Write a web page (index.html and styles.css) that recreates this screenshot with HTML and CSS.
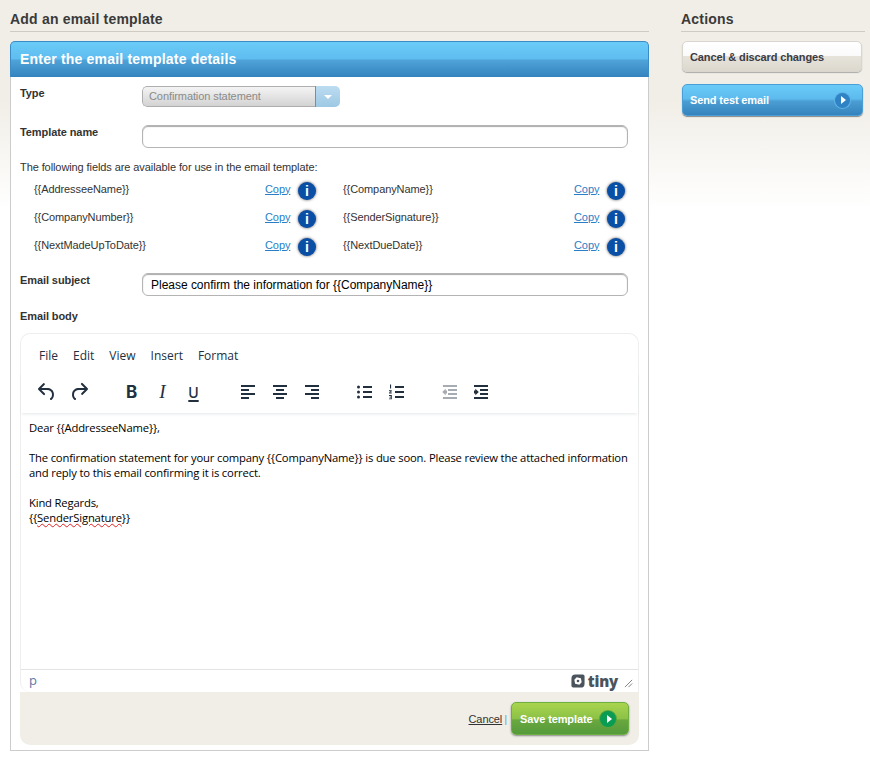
FILE: index.html
```html
<!DOCTYPE html>
<html lang="en">
<head>
<meta charset="utf-8">
<title>Add an email template</title>
<link rel="stylesheet" href="styles.css">
</head>
<body>
<div class="page">
  <main class="main">
    <h2 class="section-title">Add an email template</h2>
    <section class="panel">
      <h3 class="panel-head">Enter the email template details</h3>
      <div class="panel-body">
        <div class="form-row type-row">
          <label class="form-label">Type</label>
          <div class="select">
            <span class="select-value">Confirmation statement</span>
            <span class="select-arrow"><i class="caret"></i></span>
          </div>
        </div>
        <div class="form-row name-row">
          <label class="form-label">Template name</label>
          <div class="text-input"></div>
        </div>
        <p class="fields-intro">The following fields are available for use in the email template:</p>
        <div class="fields">
          <div class="field"><span class="field-name">{{AddresseeName}}</span><a class="copy">Copy</a><span class="info">i</span></div>
          <div class="field"><span class="field-name">{{CompanyName}}</span><a class="copy">Copy</a><span class="info">i</span></div>
          <div class="field"><span class="field-name">{{CompanyNumber}}</span><a class="copy">Copy</a><span class="info">i</span></div>
          <div class="field"><span class="field-name">{{SenderSignature}}</span><a class="copy">Copy</a><span class="info">i</span></div>
          <div class="field"><span class="field-name">{{NextMadeUpToDate}}</span><a class="copy">Copy</a><span class="info">i</span></div>
          <div class="field"><span class="field-name">{{NextDueDate}}</span><a class="copy">Copy</a><span class="info">i</span></div>
        </div>
        <div class="form-row subject-row">
          <label class="form-label">Email subject</label>
          <div class="text-input">Please confirm the information for {{CompanyName}}</div>
        </div>
        <div class="body-label">Email body</div>
        <div class="editor">
          <div class="menubar">
            <span>File</span><span>Edit</span><span>View</span><span>Insert</span><span>Format</span>
          </div>
          <div class="toolbar">
            <div class="tool-group">
              <span class="tool"><svg viewBox="0 0 24 24"><path d="M6.4 8H12c3.7 0 6.2 2 6.8 5.1.6 2.7-.4 5.6-2.3 6.8a1 1 0 0 1-1-1.8c1.1-.6 1.8-2.7 1.4-4.6-.5-2.1-2.1-3.5-4.9-3.5H6.4l3.3 3.3a1 1 0 1 1-1.4 1.4l-5-5a1 1 0 0 1 0-1.4l5-5a1 1 0 0 1 1.4 1.4L6.4 8Z"/></svg></span>
              <span class="tool"><svg viewBox="0 0 24 24"><path d="M17.6 10H12c-2.8 0-4.4 1.4-4.9 3.5-.4 2 .3 4 1.4 4.6a1 1 0 1 1-1 1.8c-2-1.2-2.9-4.1-2.3-6.8.6-3 3-5.1 6.8-5.1h5.6l-3.3-3.3a1 1 0 1 1 1.4-1.4l5 5a1 1 0 0 1 0 1.4l-5 5a1 1 0 0 1-1.4-1.4l3.3-3.3Z"/></svg></span>
            </div>
            <div class="tool-group group-text">
              <span class="tool glyph glyph-b">B</span>
              <span class="tool glyph glyph-i">I</span>
              <span class="tool glyph glyph-u">U</span>
            </div>
            <div class="tool-group group-align">
              <span class="tool"><svg viewBox="0 0 24 24"><path d="M5 5h14v2H5zM5 9h8v2H5zM5 13h14v2H5zM5 17h8v2H5z"/></svg></span>
              <span class="tool"><svg viewBox="0 0 24 24"><path d="M5 5h14v2H5zM8 9h8v2H8zM5 13h14v2H5zM8 17h8v2H8z"/></svg></span>
              <span class="tool"><svg viewBox="0 0 24 24"><path d="M5 5h14v2H5zM11 9h8v2h-8zM5 13h14v2H5zM11 17h8v2h-8z"/></svg></span>
            </div>
            <div class="tool-group">
              <span class="tool"><svg viewBox="0 0 24 24"><path d="M11 6h9v2h-9zM11 11h9v2h-9zM11 16h9v2h-9z"/><circle cx="6.500" cy="7" r="1.500"/><circle cx="6.500" cy="12" r="1.500"/><circle cx="6.500" cy="17" r="1.500"/></svg></span>
              <span class="tool"><svg viewBox="0 0 24 24"><path d="M11 6h9v2h-9zM11 11h9v2h-9zM11 16h9v2h-9zM6 4.500h1.100v4H6zM5 10.300h2.800v.9l-1.700 1.400h1.700v1H5v-.9l1.700-1.400H5zM5 15h2.800v4.300H5v-.9h1.800v-.8H5.500v-.8h1.300v-.8H5z"/></svg></span>
            </div>
            <div class="tool-group group-indent">
              <span class="tool tool-off"><svg viewBox="0 0 24 24"><path d="M6 5h14v2H6zM11 9h9v2h-9zM11 13h9v2h-9zM6 17h14v2H6zM8.700 8.700 5.200 12l3.500 3.300V13.500h1.300v-3H8.700z"/></svg></span>
              <span class="tool"><svg viewBox="0 0 24 24"><path d="M5 5h14v2H5zM11 9h8v2h-8zM11 13h8v2h-8zM5 17h14v2H5zM6.300 8.700 9.800 12l-3.500 3.300v-1.800H5v-3h1.300z"/></svg></span>
            </div>
          </div>
          <div class="content">
            <p>Dear {{AddresseeName}},</p>
            <p class="blank"></p>
            <p>The confirmation statement for your company {{CompanyName}} is due soon. Please review the attached information and reply to this email confirming it is correct.</p>
            <p class="blank"></p>
            <p>Kind Regards,</p>
            <p>{{<span class="spell">SenderSignature</span>}}</p>
          </div>
          <div class="statusbar">
            <span class="path">p</span>
            <span class="brand">
              <svg class="brand-mark" viewBox="0 0 16 16"><path fill-rule="evenodd" d="M5 .5h8.500A2 2 0 0 1 15.500 2.500V11a4.500 4.500 0 0 1-4.500 4.500H2.500A2 2 0 0 1 .5 13.500V5A4.500 4.500 0 0 1 5 .5ZM6.500 3.800 11.300 4.800 12.200 9.500 9.500 12.200 4.700 11.200 3.800 6.500Zm1.500 2.700a1.500 1.500 0 1 0 0 3 1.500 1.500 0 0 0 0-3Z"/></svg>
              <span class="brand-word">tiny</span>
            </span>
            <svg class="resize" viewBox="0 0 10 10"><path d="M9 1 1 9M9 5 5 9" /></svg>
          </div>
        </div>
        <div class="form-actions">
          <a class="cancel-link">Cancel</a>
          <span class="sep">|</span>
          <a class="btn-save">Save template<span class="go go-green"><i></i></span></a>
        </div>
      </div>
    </section>
  </main>
  <aside class="side">
    <h2 class="section-title">Actions</h2>
    <a class="btn-cancel">Cancel &amp; discard changes</a>
    <a class="btn-send">Send test email<span class="go go-blue"><i></i></span></a>
  </aside>
</div>
</body>
</html>
```
FILE: styles.css
```css
* { box-sizing: border-box; }
html, body { margin: 0; padding: 0; }
body {
  min-height: 757px;
  font-family: "Liberation Sans", Arial, sans-serif;
  font-size: 11px;
  letter-spacing: -.09px;
  color: #333;
  background: linear-gradient(#f1eee7 0, #f1eee7 100px, #fff 210px) no-repeat;
}
.page { display: flex; gap: 32px; padding: 0 5px 0 10px; }
.main { width: 639px; flex: none; }
.side { width: 184px; flex: none; }
.section-title {
  margin: 0;
  height: 32px;
  padding-top: 11px;
  font-size: 14px;
  line-height: 16px;
  font-weight: bold;
  letter-spacing: .2px;
  color: #3a3a3a;
  border-bottom: 1px solid #cfcbc3;
}
.panel {
  margin-top: 9px;
  height: 710px;
  background: #fff;
  border: 1px solid #ccc;
  border-top: 0;
  border-radius: 6px 6px 0 0;
}
.panel-head {
  margin: 0 -1px;
  height: 36px;
  padding-left: 9px;
  font-size: 14px;
  line-height: 35px;
  font-weight: bold;
  letter-spacing: .2px;
  color: #fff;
  background: linear-gradient(#6acbf8 0, #5fbdef 48%, #4fa3d8 52%, #3483be 100%);
  border: 1px solid #3a8cc6;
  border-bottom: 0;
  border-radius: 5px 5px 0 0;
}
.panel-body { padding: 0 9px; }
.form-row { display: flex; }
.form-label {
  width: 122px;
  flex: none;
  font-size: 11px;
  font-weight: bold;
  line-height: 13px;
  color: #333;
}
.type-row { padding-top: 9px; }
.type-row .form-label { padding-top: 1px; }
.select {
  display: flex;
  width: 198px;
  height: 21px;
  border-radius: 5px;
  overflow: hidden;
}
.select-value {
  flex: 1;
  padding-left: 6px;
  line-height: 19px;
  font-size: 11px;
  color: #8a8a8a;
  background: linear-gradient(#f4f4f4, #d3d3d3);
  border: 1px solid #aeaeae;
  border-right: 0;
  border-radius: 5px 0 0 5px;
}
.select-arrow {
  width: 25px;
  display: flex;
  align-items: center;
  justify-content: center;
  background: linear-gradient(#bcdcf0, #9dc8e4);
  border-left: 1px solid #8a8a8a;
}
.caret {
  width: 0;
  height: 0;
  border: 4px solid transparent;
  border-top: 4px solid #fff;
  border-bottom: 0;
}
.name-row { padding-top: 18px; }
.name-row .form-label { padding-top: 1px; }
.text-input {
  width: 486px;
  height: 23px;
  padding-left: 8px;
  font-size: 12px;
  letter-spacing: -.02px;
  line-height: 22px;
  color: #000;
  background: #fff;
  border: 1px solid #b4b4b4;
  border-radius: 6px;
  box-shadow: inset 0 1px 1px #aaa;
}
.fields-intro {
  margin: 13px 0 0;
  font-size: 11px;
  line-height: 13px;
  color: #333;
}
.fields {
  display: grid;
  grid-template-columns: 309px 290px;
  grid-auto-rows: 28px;
  margin-top: 2px;
  padding-left: 14px;
}
.field { display: flex; align-items: center; padding-top: 1px; }
.field-name { width: 231px; flex: none; font-size: 11px; color: #333; margin-top: -4px; }
.copy { width: 33px; flex: none; font-size: 11px; color: #2a7ec6; text-decoration: underline; margin-top: -4px; }
.info {
  width: 18px;
  height: 18px;
  flex: none;
  border-radius: 50%;
  background: #0a4fa6;
  box-shadow: 0 0 3px #555;
  color: #fff;
  font-size: 14px;
  font-weight: bold;
  line-height: 18px;
  text-align: center;
}
.subject-row { padding-top: 13px; }
.subject-row .form-label { padding-top: 1px; }
.body-label {
  margin-top: 14px;
  font-size: 11px;
  font-weight: bold;
  line-height: 13px;
}
.editor {
  margin-top: 10px;
  height: 359px;
  display: flex;
  flex-direction: column;
  border: 1px solid #eee;
  border-bottom: 0;
  border-radius: 10px 10px 0 10px;
  font-family: "Open Sans", sans-serif;
  letter-spacing: 0;
  color: #222f3e;
}
.menubar {
  display: flex;
  gap: 15px;
  height: 38px;
  padding: 13px 0 0 18px;
  font-size: 12px;
  line-height: 17px;
}
.toolbar {
  display: flex;
  gap: 20px;
  height: 41px;
  padding: 6px 0 0 10px;
  box-shadow: 0 2px 3px -1px rgba(34, 47, 62, .12);
  position: relative;
}
.tool-group { display: flex; }
.group-text { margin-left: 1px; }
.group-align { margin-left: 3px; }
.group-indent { margin-left: 1px; }
.tool {
  width: 32px;
  height: 28px;
  display: flex;
  align-items: center;
  justify-content: center;
}
.tool svg { width: 24px; height: 24px; fill: #222f3e; }
.tool-off svg { fill: #a7acb2; }
.glyph { width: 31px; color: #222f3e; line-height: 1; }
.glyph-b { font: bold 17px Inter, sans-serif; }
.glyph-i { font: italic 19px "Liberation Serif", serif; }
.glyph-u { font: 500 14px Inter, sans-serif; text-decoration: underline 2px; text-underline-offset: 2px; }
.content {
  flex: 1;
  padding: 7px 8px 0;
  font-size: 11.25px;
  letter-spacing: -.17px;
  line-height: 15px;
  color: #000;
}
.content p { margin: 0; }
.content .blank { height: 15px; }
.spell { text-decoration: underline wavy #e02020 1px; text-underline-offset: 1px; }
.statusbar {
  height: 23px;
  flex: none;
  display: flex;
  align-items: center;
  padding: 0 5px 0 8px;
  border-top: 1px solid #e3e3e3;
}
.path { font-size: 13px; color: #5c78a8; flex: 1; margin-top: -2px; }
.brand { display: flex; align-items: center; gap: 3px; color: #4b535c; }
.brand-mark { width: 14px; height: 14px; fill: #4b535c; }
.brand-word { font: 800 15px/16px "Open Sans", sans-serif; letter-spacing: -.2px; }
.resize { width: 9px; height: 9px; margin-left: 6px; margin-top: 5px; stroke: #777; stroke-width: 1; fill: none; }
.form-actions {
  height: 53px;
  display: flex;
  align-items: center;
  justify-content: flex-end;
  gap: 2px;
  padding: 0 10px 0 0;
  background: #f0eee7;
  border-radius: 0 0 10px 10px;
}
.cancel-link { font-size: 11px; color: #333; text-decoration: underline; }
.sep { color: #5aa5d8; font-size: 11px; margin-right: 2px; }
.btn-save {
  width: 118px;
  height: 33px;
  display: flex;
  align-items: center;
  justify-content: space-between;
  padding: 0 12px 0 8px;
  font-size: 11px;
  font-weight: bold;
  letter-spacing: -.12px;
  color: #fff;
  background: linear-gradient(#a9d44e 0, #8cc246 50%, #6aa83f 55%, #559a3c 100%);
  border: 1px solid #6fae41;
  border-radius: 5px;
  box-shadow: 0 1px 2px #888;
}
.go {
  width: 16px;
  height: 16px;
  border-radius: 50%;
  display: flex;
  align-items: center;
  justify-content: center;
  flex: none;
}
.go i {
  width: 0;
  height: 0;
  margin-left: 2px;
  border: 4px solid transparent;
  border-left: 5px solid #fff;
  border-right: 0;
}
.go-green { background: #0a9c52; box-shadow: 0 0 0 1px #5ba53c; }
.go-blue { width: 15px; height: 15px; background: #2f82c4; box-shadow: 0 0 0 1px #5fb3e6; }
.btn-cancel {
  display: block;
  margin: 9px 3px 0 1px;
  height: 31px;
  padding-left: 7px;
  font-size: 11px;
  font-weight: bold;
  letter-spacing: -.12px;
  line-height: 30px;
  color: #3b3b45;
  background: linear-gradient(#fff 0, #fafafa 48%, #e6e3da 50%, #dcd8ce 100%);
  border: 1px solid #d9d6cf;
  border-radius: 5px;
  box-shadow: 0 1px 1px #aaa;
}
.btn-send {
  display: flex;
  align-items: center;
  justify-content: space-between;
  margin: 12px 2px 0 1px;
  height: 32px;
  padding: 0 12px 0 7px;
  font-size: 11px;
  font-weight: bold;
  letter-spacing: -.12px;
  color: #fff;
  background: linear-gradient(#6acbf8 0, #5dbbed 45%, #4a9dd2 55%, #3683bd 100%);
  border: 1px solid #4a9fd8;
  border-radius: 5px;
  box-shadow: 0 1px 1px #888;
}
```
